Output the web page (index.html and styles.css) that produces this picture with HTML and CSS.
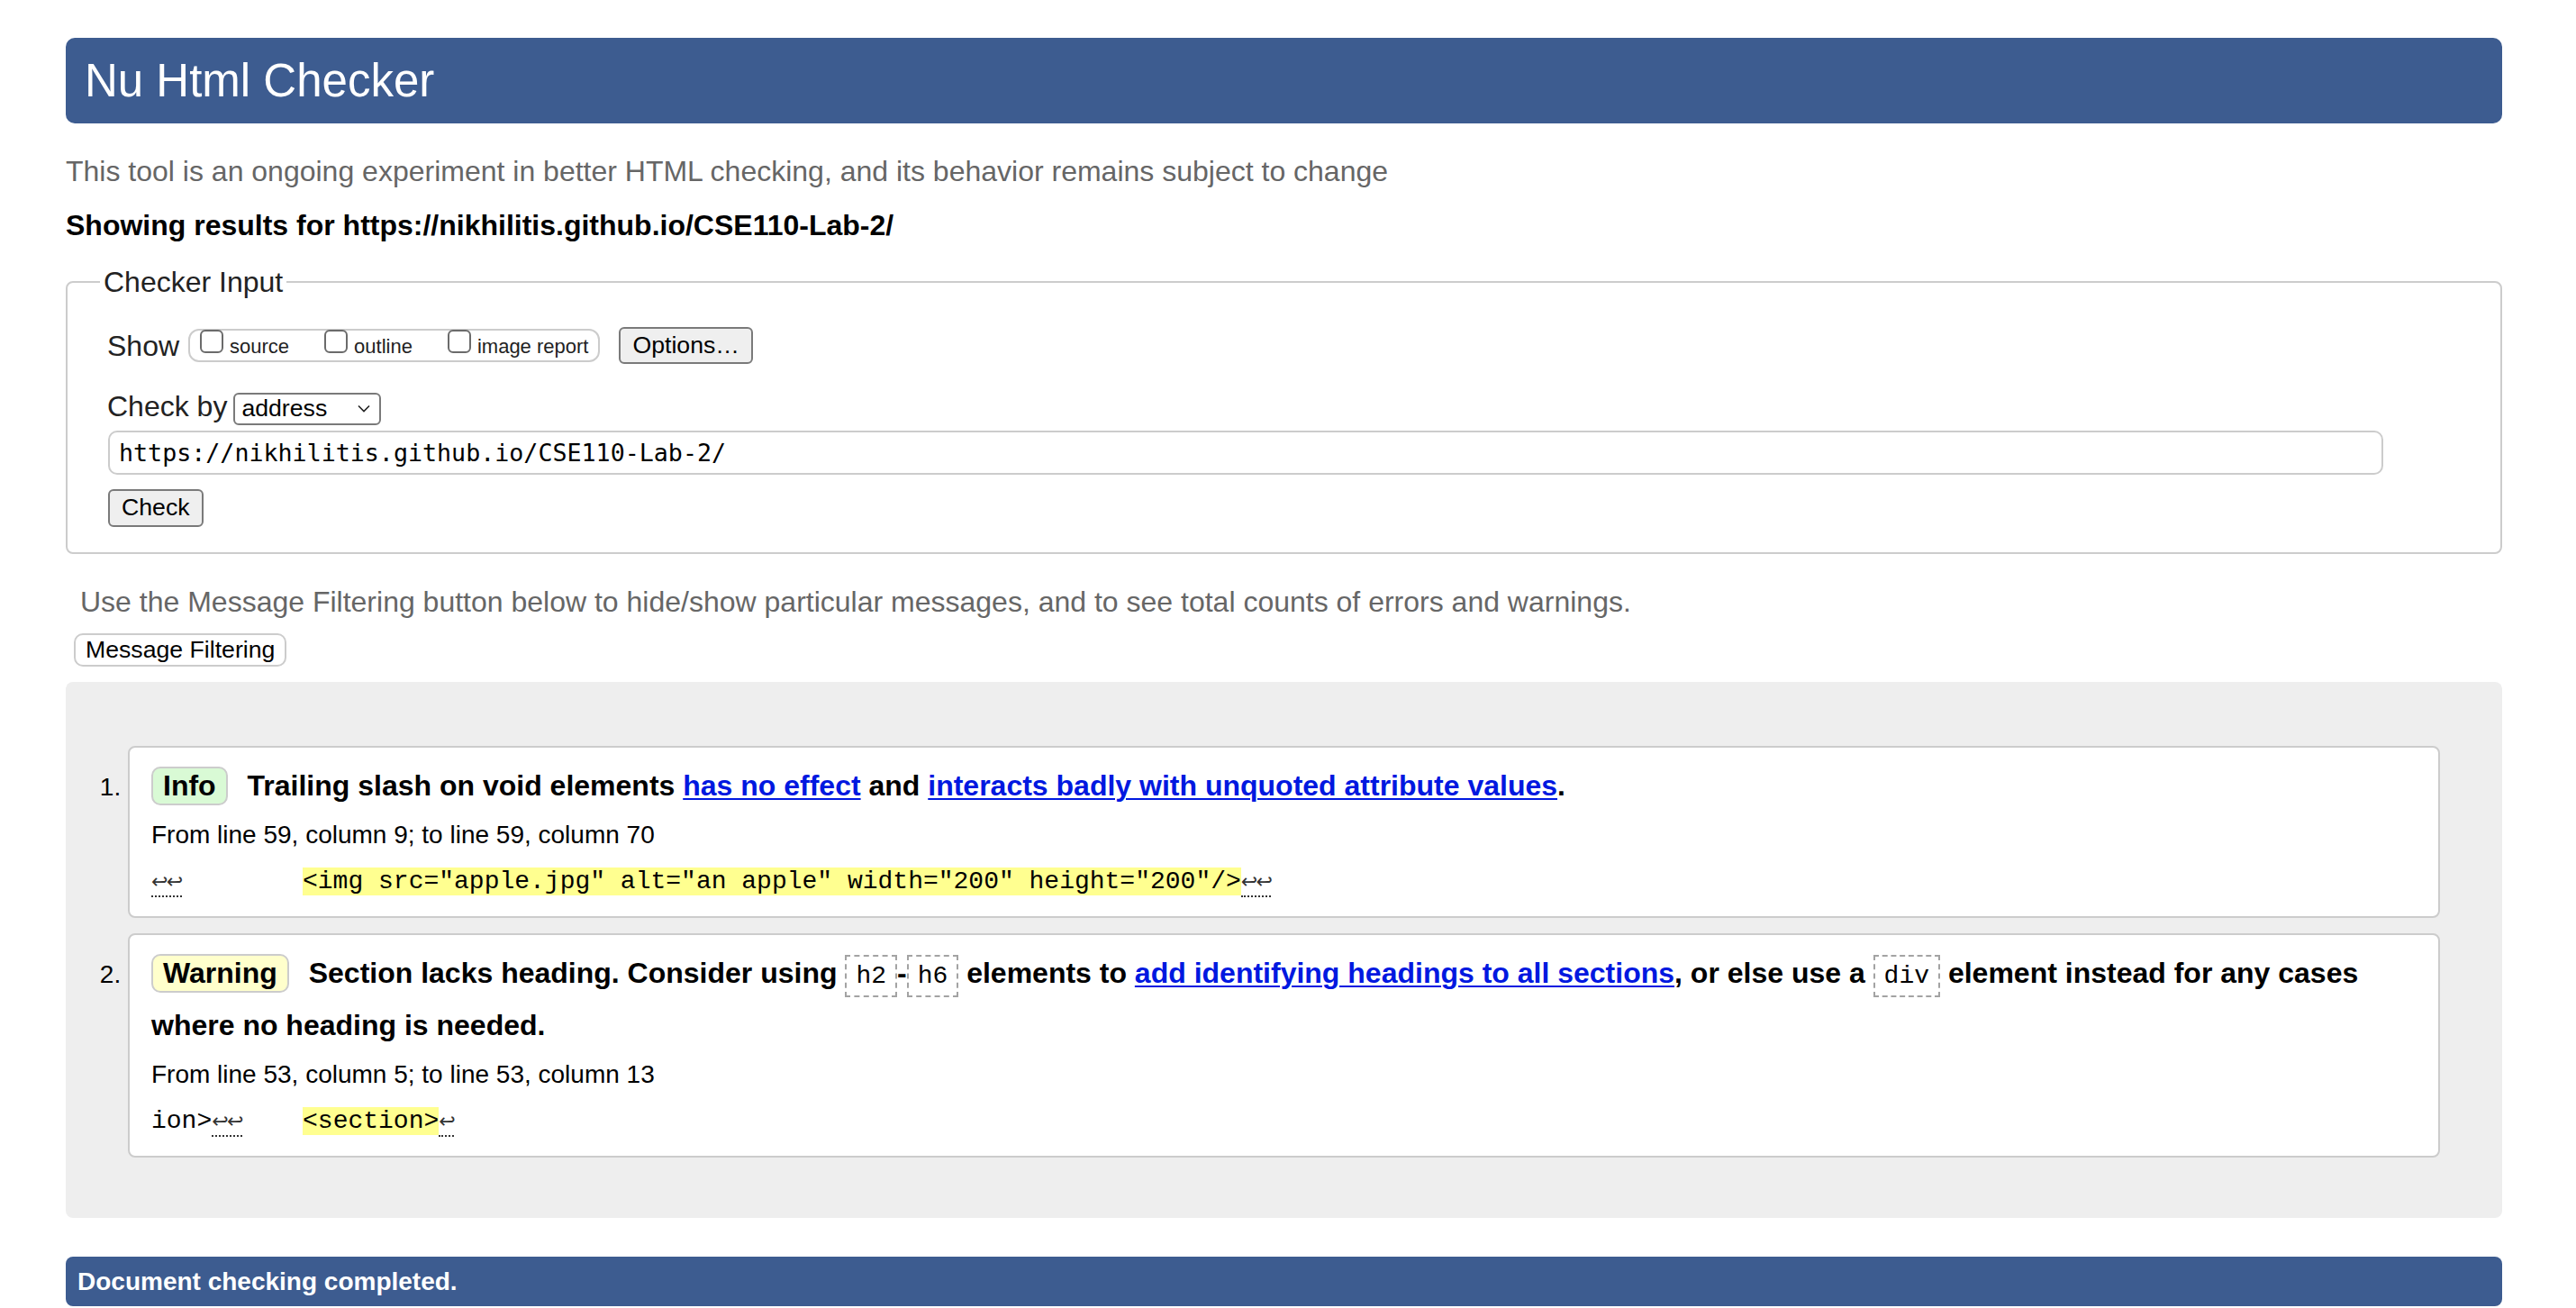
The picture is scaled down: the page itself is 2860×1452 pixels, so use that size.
FILE: index.html
```html
<!DOCTYPE html>
<html lang="en">
<head>
<meta charset="utf-8">
<title>Nu Html Checker</title>
<link rel="stylesheet" href="styles.css">
</head>
<body>
<div class="page">
  <h1 class="title">Nu Html Checker</h1>
  <p class="intro">This tool is an ongoing experiment in better HTML checking, and its behavior remains subject to change</p>
  <h2 class="showing">Showing results for https://nikhilitis.github.io/CSE110-Lab-2/</h2>

  <fieldset class="checker">
    <legend>Checker Input</legend>
    <div class="row show-row">
      <span class="lbl">Show</span>
      <span class="opts">
        <label class="opt"><input type="checkbox"><span>source</span></label>
        <label class="opt"><input type="checkbox"><span>outline</span></label>
        <label class="opt"><input type="checkbox"><span>image report</span></label>
      </span>
      <button class="btn options" type="button">Options…</button>
    </div>
    <div class="row by-row">
      <span class="lbl">Check by</span>
      <span class="select">address<svg class="chev" width="14" height="9" viewBox="0 0 14 9"><path d="M1 1.5 L7 7.5 L13 1.5" fill="none" stroke="#222" stroke-width="1.6"/></svg></span>
    </div>
    <div class="row url-row">
      <input class="url" type="text" value="https://nikhilitis.github.io/CSE110-Lab-2/">
    </div>
    <div class="row check-row">
      <button class="btn check" type="button">Check</button>
    </div>
  </fieldset>

  <p class="filter-note">Use the Message Filtering button below to hide/show particular messages, and to see total counts of errors and warnings.</p>
  <button class="filter-btn" type="button">Message Filtering</button>

  <section class="results">
    <ol class="messages">
      <li class="msg">
        <p class="text"><span class="badge info">Info</span> Trailing slash on void elements <a href="#">has no effect</a> and <a href="#">interacts badly with unquoted attribute values</a>.</p>
        <p class="loc">From line 59, column 9; to line 59, column 70</p>
        <p class="extract"><span class="lf"><span class="arr">↩</span><span class="arr">↩</span></span>        <mark>&lt;img src="apple.jpg" alt="an apple" width="200" height="200"/&gt;</mark><span class="lf"><span class="arr">↩</span><span class="arr">↩</span></span></p>
      </li>
      <li class="msg">
        <p class="text"><span class="badge warning">Warning</span> Section lacks heading. Consider using <code class="el">h2</code>-<code class="el">h6</code> elements to <a href="#">add identifying headings to all sections</a>, or else use a <code class="el">div</code> element instead for any cases where no heading is needed.</p>
        <p class="loc">From line 53, column 5; to line 53, column 13</p>
        <p class="extract">ion&gt;<span class="lf"><span class="arr">↩</span><span class="arr">↩</span></span>    <mark>&lt;section&gt;</mark><span class="lf"><span class="arr">↩</span></span></p>
      </li>
    </ol>
  </section>

  <p class="done">Document checking completed.</p>
</div>
</body>
</html>
```

FILE: styles.css
```css
html, body {
  margin: 0;
  padding: 0;
  background: #fff;
  color: #000;
  font-family: "Liberation Sans", Arial, sans-serif;
  font-size: 32px;
}

.page {
  margin: 0 82px 0 73px;
  padding-top: 42px;
}

.title {
  margin: 0;
  height: 95px;
  line-height: 95px;
  padding: 0 21px;
  background: #3d5c90;
  color: #fff;
  font-size: 51px;
  font-weight: normal;
  border-radius: 10px;
}

.intro {
  margin: 33px 0 0;
  font-size: 32px;
  line-height: 40px;
  color: #666;
}

.showing {
  margin: 20px 0 0;
  font-size: 32px;
  line-height: 40px;
  font-weight: bold;
}

/* Checker input fieldset */
.checker {
  margin: 25px 0 0;
  padding: 32px 40px 28px 44px;
  border: 2px solid #ccc;
  border-radius: 8px;
  min-width: 0;
}

.checker legend {
  padding: 0 4px;
  margin-left: -8px;
  font-size: 32px;
  line-height: 36px;
  color: #222;
}

.row {
  display: flex;
  align-items: center;
}

.lbl {
  font-size: 32px;
  line-height: 36px;
  color: #222;
}

.show-row {
  height: 41px;
}

.opts {
  display: flex;
  align-items: flex-start;
  box-sizing: border-box;
  height: 37px;
  margin-left: 10px;
  padding: 0 11px;
  gap: 39px;
  border: 2px solid #ccc;
  border-radius: 12px;
}

.opt {
  display: flex;
  align-items: flex-start;
  gap: 7px;
  font-size: 22px;
  line-height: 26px;
  color: #222;
}

.opt input {
  appearance: none;
  -webkit-appearance: none;
  box-sizing: border-box;
  width: 26px;
  height: 26px;
  margin: -1px 0 0;
  border: 2px solid #6b6b6b;
  border-radius: 6px;
  background: #fff;
}

.opt span {
  margin-top: 5px;
}

.btn {
  box-sizing: border-box;
  font-family: "Liberation Sans", Arial, sans-serif;
  font-size: 26.67px;
  color: #000;
  background: #efefef;
  border: 2px solid #7a7a7a;
  border-radius: 6px;
  padding: 0 13px;
}

.options {
  height: 41px;
  margin-left: 21px;
}

.by-row {
  margin-top: 29px;
  align-items: baseline;
}

.select {
  display: inline-flex;
  align-items: center;
  box-sizing: border-box;
  width: 164px;
  height: 36px;
  margin-left: 7px;
  padding-left: 7px;
  border: 2px solid #7a7a7a;
  border-radius: 6px;
  font-size: 26.67px;
  color: #000;
  background: #fff;
}

.chev {
  margin-left: auto;
  margin-right: 10px;
}

.url-row {
  margin-top: 6px;
}

.url {
  box-sizing: border-box;
  width: 2526px;
  height: 49px;
  margin: 0 0 0 1px;
  padding: 0 10px;
  border: 2px solid #ccc;
  border-radius: 10px;
  font-family: "DejaVu Sans Mono", monospace;
  font-size: 26.67px;
  color: #000;
  background: #fff;
}

.check-row {
  margin-top: 16px;
}

.check {
  height: 42px;
  margin-left: 1px;
}

/* Message filtering */
.filter-note {
  margin: 33px 0 0 16px;
  font-size: 32px;
  line-height: 40px;
  color: #666;
}

.filter-btn {
  display: block;
  box-sizing: border-box;
  height: 37px;
  margin: 15px 0 0 9px;
  padding: 0 11px;
  background: #fff;
  border: 2px solid #ccc;
  border-radius: 10px;
  font-family: "Liberation Sans", Arial, sans-serif;
  font-size: 26.67px;
  color: #000;
}

/* Results */
.results {
  margin-top: 17px;
  padding: 71px 69px 67px;
  background: #eee;
  border-radius: 8px;
}

.messages {
  margin: 0;
  padding: 0;
  list-style: decimal outside;
}

.msg {
  font-size: 28px;
  background: #fff;
  border: 2px solid #ccc;
  border-radius: 8px;
  padding: 13px 24px 18px;
}

.msg + .msg {
  margin-top: 17px;
}

.text {
  margin: 0;
  font-size: 32px;
  line-height: 58px;
  font-weight: bold;
}

.badge {
  display: inline-block;
  line-height: 37px;
  padding: 1px 11px;
  margin-right: 13px;
  border: 2px solid #ccc;
  border-radius: 10px;
}

.badge.info {
  background: #d9fad5;
}

.badge.warning {
  background: #ffffcc;
}

.text a {
  color: #0018e0;
  text-decoration: underline;
  text-decoration-thickness: 2px;
  text-underline-offset: 3px;
}

.el {
  font-family: "Liberation Mono", monospace;
  font-size: 28px;
  line-height: 1;
  font-weight: normal;
  padding: 6px 10px;
  border: 2px dashed #a3a3a3;
}

.loc {
  margin: 6px 0 0;
  font-size: 28px;
  line-height: 40px;
}

.extract {
  margin: 12px 0 0;
  font-family: "Liberation Mono", monospace;
  font-size: 28px;
  line-height: 40px;
  white-space: pre;
}

.extract mark {
  background: #ffff90;
  color: #000;
}

.lf {
  border-bottom: 2px dotted #333;
}

.arr {
  display: inline-block;
  width: 16.8px;
  text-align: center;
  font-family: "DejaVu Sans", sans-serif;
  font-size: 22px;
  line-height: 1;
  color: #333;
}

/* Footer */
.done {
  margin: 43px 0 0;
  height: 55px;
  line-height: 55px;
  padding: 0 13px;
  background: #3d5c90;
  color: #fff;
  font-size: 28px;
  font-weight: bold;
  border-radius: 8px;
}
```
